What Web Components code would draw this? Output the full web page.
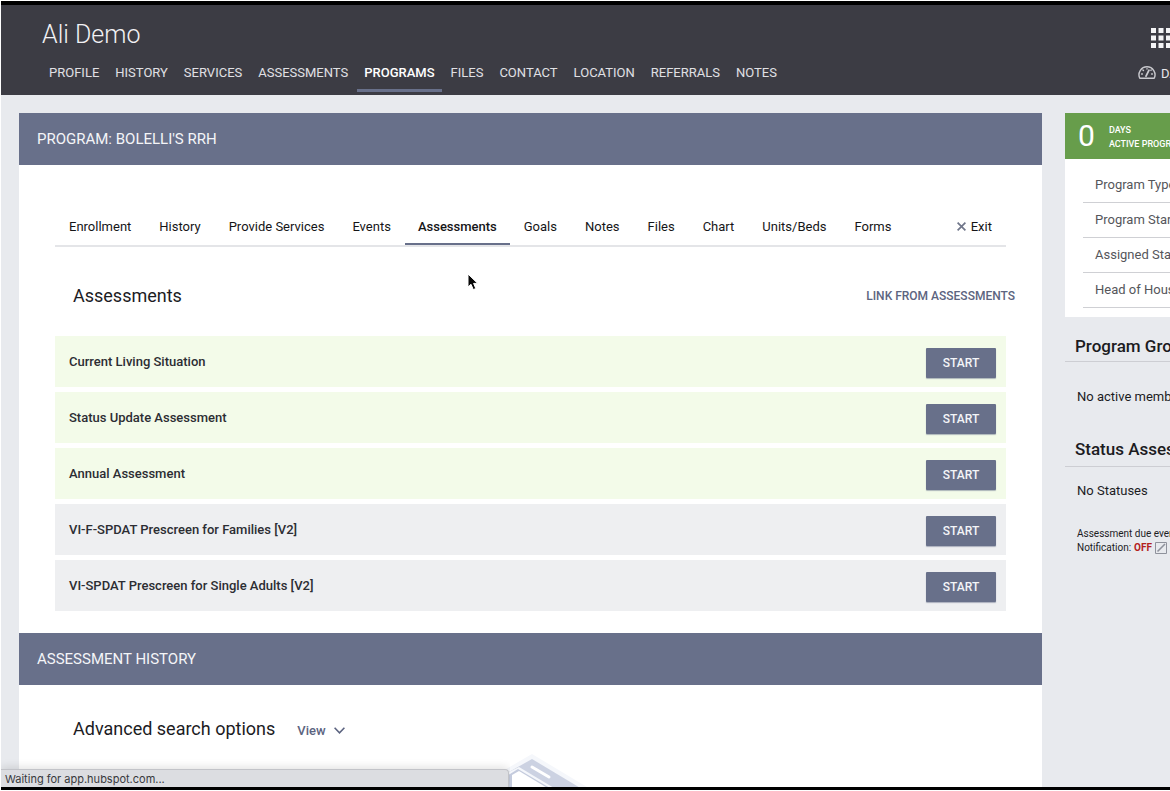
<!DOCTYPE html>
<html lang="en">
<head>
<meta charset="utf-8">
<title>Ali Demo - Programs</title>
<style>
html, body { margin: 0; height: 100%; background: #fff; }
body { font-family: Roboto, "Liberation Sans", sans-serif; font-size: 13px; color: #1c1c1f; overflow: hidden; }
</style>
</head>
<body>
<app-window>
  <client-header slot="header" name="Ali Demo">
    <nav-link>PROFILE</nav-link>
    <nav-link>HISTORY</nav-link>
    <nav-link>SERVICES</nav-link>
    <nav-link>ASSESSMENTS</nav-link>
    <nav-link active>PROGRAMS</nav-link>
    <nav-link>FILES</nav-link>
    <nav-link>CONTACT</nav-link>
    <nav-link>LOCATION</nav-link>
    <nav-link>REFERRALS</nav-link>
    <nav-link>NOTES</nav-link>
  </client-header>

  <section-panel slot="main">
    <span slot="title">PROGRAM: BOLELLI'S RRH</span>
    <tab-bar>
      <tab-link>Enrollment</tab-link>
      <tab-link>History</tab-link>
      <tab-link>Provide Services</tab-link>
      <tab-link>Events</tab-link>
      <tab-link active>Assessments</tab-link>
      <tab-link>Goals</tab-link>
      <tab-link>Notes</tab-link>
      <tab-link>Files</tab-link>
      <tab-link>Chart</tab-link>
      <tab-link>Units/Beds</tab-link>
      <tab-link>Forms</tab-link>
      <tab-link slot="end" close>Exit</tab-link>
    </tab-bar>
    <assessment-list>
      <assessment-row due>Current Living Situation</assessment-row>
      <assessment-row due>Status Update Assessment</assessment-row>
      <assessment-row due>Annual Assessment</assessment-row>
      <assessment-row>VI-F-SPDAT Prescreen for Families [V2]</assessment-row>
      <assessment-row>VI-SPDAT Prescreen for Single Adults [V2]</assessment-row>
    </assessment-list>
  </section-panel>

  <section-panel slot="main">
    <span slot="title">ASSESSMENT HISTORY</span>
    <search-options></search-options>
    <empty-picture></empty-picture>
  </section-panel>

  <program-card slot="side"></program-card>
  <side-block slot="side">
    <span slot="title">Program Group Members</span>
    No active members
  </side-block>
  <side-block slot="side" compact>
    <span slot="title">Status Assessments</span>
    No Statuses
  </side-block>
  <status-note slot="side"></status-note>

  <load-status slot="overlay">Waiting for app.hubspot.com...</load-status>
  <mouse-pointer slot="overlay"></mouse-pointer>
</app-window>

<script>
function define(name, html) {
  const template = document.createElement('template');
  template.innerHTML = html;
  customElements.define(name, class extends HTMLElement {
    constructor() {
      super();
      this.attachShadow({ mode: 'open' }).append(template.content.cloneNode(true));
    }
    connectedCallback() {
      const target = this.shadowRoot.querySelector('[data-name]');
      if (target) target.textContent = this.getAttribute('name');
    }
  });
}

define('app-window', `
<style>
:host { display: flex; flex-direction: column; position: relative; box-sizing: border-box; height: 100vh;
  padding: 1px 0 0 1px; overflow: hidden; }
.frame { flex: 1; min-height: 0; display: flex; flex-direction: column; margin-bottom: 1px;
  border: solid #000; border-width: 4px 0 3px; background: #e8eaee; overflow: hidden; }
.columns { flex: 1; min-height: 0; display: grid; grid-template-columns: minmax(0, 1fr) 105px; column-gap: 23px;
  padding: 18px 0 0 18px; overflow: hidden; }
main, aside { min-width: 0; }
aside { overflow: hidden; white-space: nowrap; }
</style>
<div class="frame">
  <slot name="header"></slot>
  <div class="columns">
    <main><slot name="main"></slot></main>
    <aside><slot name="side"></slot></aside>
  </div>
</div>
<slot name="overlay"></slot>`);

define('client-header', `
<style>
:host { display: block; flex: none; background: #3c3c44; color: #e6e6ea; overflow: hidden; }
.top, .bottom { display: flex; justify-content: space-between; }
.top { height: 50px; padding: 10px 0 0 41px; box-sizing: border-box; }
h1 { margin: 0; font-size: 25px; line-height: 40px; font-weight: 300; color: #f2f2f4; }
.apps, .dash { flex: none; overflow: hidden; }
.apps { width: 19px; border: 0; padding: 13px 0 0; background: none; display: flex; align-items: flex-start; }
.bottom { height: 40px; padding-left: 41px; }
nav { display: flex; gap: 2px; }
.dash { width: 32px; height: 36px; display: flex; align-items: center; gap: 5px; color: inherit;
  text-decoration: none; white-space: nowrap; }
svg { flex: none; display: block; }
</style>
<div class="top">
  <h1 data-name></h1>
  <button class="apps" aria-label="Apps">
    <svg width="20" height="20" viewBox="0 0 20 20" fill="#f4f4f6">
      <path d="M0 0h5v5H0zM7.5 0h5v5h-5zM15 0h5v5h-5zM0 7.5h5v5H0zM7.5 7.5h5v5h-5zM15 7.5h5v5h-5zM0 15h5v5H0zM7.5 15h5v5h-5zM15 15h5v5h-5z"/>
    </svg>
  </button>
</div>
<div class="bottom">
  <nav><slot></slot></nav>
  <a class="dash" href="#">
    <svg width="18" height="16" viewBox="0 0 18 16" fill="none" stroke="#c9c9ce" stroke-width="1.4" stroke-linecap="round">
      <path d="M1.8 13.3A8 8 0 1 1 16.2 13.3Z" stroke-linejoin="round"/>
      <path d="M8 11.2 11 5.2" stroke-width="1.8"/>
      <path d="M3.6 9h.8M4.9 5l.6.6M9 3.6v.5M13.2 5l-.3.3M14.4 9h-.8"/>
    </svg>
    <span>DASHBOARD</span>
  </a>
</div>`);

define('nav-link', `
<style>
:host { display: block; }
a { display: block; padding: 0 7px; line-height: 36px; height: 37px; color: #e0e0e4; text-decoration: none;
  border-bottom: 3px solid transparent; box-sizing: border-box; white-space: nowrap; }
:host([active]) a { border-color: #68708a; color: #fff; font-weight: 500; }
</style>
<a href="#"><slot></slot></a>`);

define('section-panel', `
<style>
:host { display: block; background: #fff; }
h2 { margin: 0; padding: 0 18px; background: #68708a; color: #f4f5f8; font-size: 15px; font-weight: 400; line-height: 52px; }
</style>
<h2><slot name="title"></slot></h2>
<slot></slot>`);

define('tab-bar', `
<style>
:host { display: block; padding: 43px 36px 0; }
nav { display: flex; border-bottom: 2px solid #e4e5e8; }
.end { margin-left: auto; }
</style>
<nav><slot></slot><div class="end"><slot name="end"></slot></div></nav>`);

define('tab-link', `
<style>
:host { display: block; }
a { display: flex; align-items: center; gap: 5px; padding: 0 14px; height: 37px; line-height: 37px; color: #151517;
  text-decoration: none; white-space: nowrap; }
:host([active]) a { padding: 0 13px; font-weight: 500; box-shadow: 0 -2px #68708a inset; }
svg { display: none; }
:host([close]) svg { display: block; }
</style>
<a href="#"><svg width="9" height="9" viewBox="0 0 9 9" stroke="#70768a" stroke-width="1.7"><path d="M.6.6l7.8 7.8M8.4.6.6 8.4"/></svg><slot></slot></a>`);

define('assessment-list', `
<style>
:host { display: block; padding: 0 36px 22px; }
header { display: flex; justify-content: space-between; align-items: center; height: 89px; box-sizing: border-box;
  padding: 9px 0 0 18px; margin-right: -9px; }
h3 { margin: 0; font-size: 18px; font-weight: 400; line-height: 24px; }
a { color: #5c6480; font-size: 12px; font-weight: 500; text-decoration: none; }
.rows { display: flex; flex-direction: column; gap: 5px; }
</style>
<header><h3>Assessments</h3><a href="#">LINK FROM ASSESSMENTS</a></header>
<div class="rows"><slot></slot></div>`);

define('assessment-row', `
<style>
:host { display: flex; justify-content: space-between; align-items: center; height: 51px; padding: 0 10px 0 14px;
  box-sizing: border-box; background: #eeeff1; color: #2c2d33; font-weight: 500; }
:host([due]) { background: #f3fbe9; }
button { width: 70px; height: 30px; margin-top: 2px; padding: 0; border: 0; border-radius: 1px; background: #68708a; color: #f4f5f8;
  font: 500 12px Roboto, "Liberation Sans", sans-serif; box-shadow: 0 1px 1px #68708a80; }
</style>
<span><slot></slot></span><button>START</button>`);

define('search-options', `
<style>
:host { display: flex; align-items: center; gap: 22px; height: 68px; padding: 20px 54px 0; box-sizing: border-box; }
h3 { margin: 0; font-size: 18px; font-weight: 400; line-height: 24px; }
button { display: flex; align-items: center; gap: 8px; padding: 2px 0 0; border: 0; background: none; color: #5c6480;
  font: 500 13px Roboto, "Liberation Sans", sans-serif; }
</style>
<h3>Advanced search options</h3>
<button>View <svg width="11" height="7" viewBox="0 0 11 7" fill="none" stroke="#5c6480" stroke-width="1.6"><path d="M.6.8l4.9 5 4.9-5"/></svg></button>`);

define('empty-picture', `
<style>
:host { display: flex; justify-content: center; }
svg { display: block; }
</style>
<svg width="112" height="100" viewBox="0 0 112 100" aria-hidden="true">
  <path d="M57 1 112 34V100H0V34Z" fill="#f5f7fb"/>
  <path d="M57 6 112 39V60H20V27Z" fill="#ccd2e2"/>
  <path d="M34 19 44 14 94 44V60H20V26Z" fill="#f5f7fb"/>
  <path d="M35 21 43 16 90 44V60H34L24 27Z" fill="#c4cbdd"/>
  <path d="M37 22 44 18 84 42V60H60L37 34Z" fill="#fff"/>
  <path d="M57 14 74 24" stroke="#fff" stroke-width="3" stroke-linecap="round"/>
</svg>`);

define('program-card', `
<style>
:host { display: block; background: #fff; padding-bottom: 9px; }
.count { display: flex; align-items: center; gap: 14px; height: 46px; padding-left: 13px; background: #679d4b; color: #fff; }
.num { font-size: 30px; line-height: 46px; font-weight: 400; }
.label { font-size: 9px; line-height: 14px; padding-top: 1px; font-weight: 500; }
dl { margin: 9px 0 0 18px; color: #55565b; }
dt { height: 34px; line-height: 34px; padding-left: 12px; border-bottom: 1px solid #cfd0d4; }
</style>
<div class="count"><span class="num">0</span><div class="label">DAYS<br>ACTIVE PROGRAM</div></div>
<dl><dt>Program Type:</dt><dt>Program Start Date:</dt><dt>Assigned Staff:</dt><dt>Head of Household:</dt></dl>`);

define('side-block', `
<style>
:host { display: block; }
h3 { margin: 0; padding: 12px 0 0 10px; height: 45px; line-height: 34px; box-sizing: border-box; font-size: 17px; font-weight: 500;
  border-bottom: 1px solid #cdced3; }
div { padding-left: 12px; height: 70px; line-height: 70px; }
:host([compact]) h3 { height: 35px; padding-top: 0; }
:host([compact]) div { height: 48px; line-height: 48px; }
</style>
<h3><slot name="title"></slot></h3><div><slot></slot></div>`);

define('status-note', `
<style>
:host { display: block; padding: 12px 0 0 12px; font-size: 10px; line-height: 14px; }
p { margin: 0; display: flex; align-items: center; gap: 3px; }
strong { color: #b3201d; font-weight: 700; }
a { display: block; }
svg { display: block; }
</style>
<p>Assessment due every year</p>
<p>Notification: <strong>OFF</strong><a href="#" aria-label="Edit notification"><svg width="12" height="12" viewBox="0 0 12 12" fill="none" stroke="#8f929c"><path d="M.5.5h11v11H.5z"/><path d="M2.5 9.5 10 2" stroke-width="1.6"/></svg></a></p>`);

define('load-status', `
<style>
:host { position: absolute; left: 1px; bottom: 4px; width: 508px; height: 18px; box-sizing: border-box; padding-left: 4px;
  background: #dcdde1; border: solid #c2c3c8; border-width: 1px 1px 0 0; border-radius: 0 4px 0 0; box-shadow: 0 -2px 8px #0000001f;
  clip-path: inset(-12px -1px 0 0); font: 11px/18px Inter, "Liberation Sans", sans-serif; color: #38393d; }
</style>
<slot></slot>`);

define('mouse-pointer', `
<style>
:host { position: absolute; left: 467px; top: 273px; }
svg { display: block; }
</style>
<svg width="12" height="18" viewBox="0 0 12 18" aria-hidden="true"><path d="M1 1V14L4 11.3 6.3 16.6 8.8 15.5 6.6 10.4H10.7Z" fill="#080808" stroke="#fff"/></svg>`);
</script>
</body>
</html>
